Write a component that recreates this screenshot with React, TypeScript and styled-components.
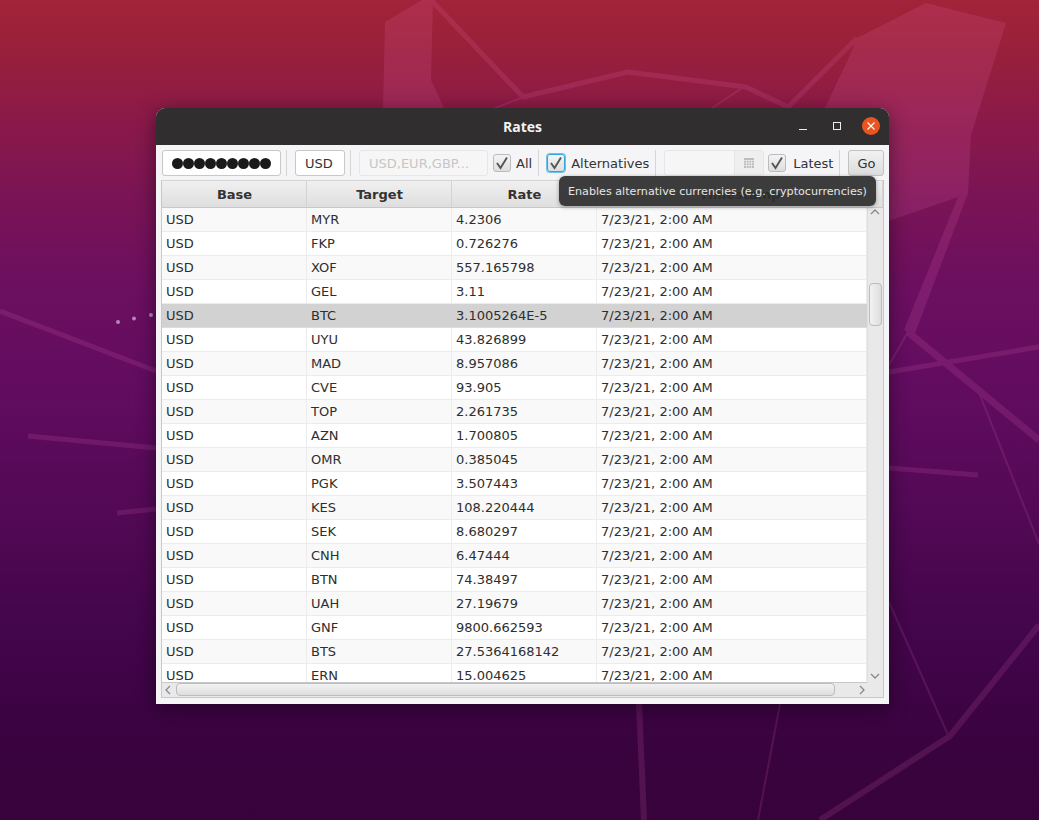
import styled, { createGlobalStyle } from 'styled-components';

const rows = [
  ['MYR', '4.2306'],
  ['FKP', '0.726276'],
  ['XOF', '557.165798'],
  ['GEL', '3.11'],
  ['BTC', '3.1005264E-5'],
  ['UYU', '43.826899'],
  ['MAD', '8.957086'],
  ['CVE', '93.905'],
  ['TOP', '2.261735'],
  ['AZN', '1.700805'],
  ['OMR', '0.385045'],
  ['PGK', '3.507443'],
  ['KES', '108.220444'],
  ['SEK', '8.680297'],
  ['CNH', '6.47444'],
  ['BTN', '74.38497'],
  ['UAH', '27.19679'],
  ['GNF', '9800.662593'],
  ['BTS', '27.5364168142'],
  ['ERN', '15.004625'],
];

const GlobalStyle = createGlobalStyle`
  html, body {
    margin: 0;
    padding: 0;
    height: 100%;
    overflow: hidden;
    background: #3a0340;
  }
  * { box-sizing: border-box; }
`;

const Desktop = styled.div`
  position: relative;
  width: 1039px;
  height: 820px;
  overflow: hidden;
  font-family: 'DejaVu Sans', sans-serif;
  font-size: 13px;
  color: #333;
  background: linear-gradient(180deg, #a2233a 0%, #9a2139 5%, #8c1a48 14%, #7a1455 24%, #6c0f60 35%, #620c60 47%, #530956 62%, #42054a 78%, #3a0340 90%, #38033c 100%);
`;

const Wallpaper = styled.svg`
  position: absolute;
  inset: 0;
`;

const Window = styled.div`
  position: absolute;
  left: 156px;
  top: 108px;
  width: 733px;
  height: 596px;
  display: flex;
  flex-direction: column;
  background: #f5f4f6;
  border-radius: 9px 9px 0 0;
  box-shadow: 0 4px 20px rgba(0, 0, 0, 0.45);
`;

const TitleBar = styled.div`
  position: relative;
  flex: none;
  height: 37px;
  display: flex;
  align-items: center;
  justify-content: center;
  background: #302e2e;
  border-radius: 9px 9px 0 0;
  color: #f2f2f2;
  font-family: 'Open Sans', 'Noto Sans', sans-serif;
  font-weight: 700;
  font-size: 14px;
`;

const WindowButtons = styled.div`
  position: absolute;
  right: 9px;
  top: 9px;
  display: flex;
  align-items: center;
  gap: 16px;
`;

const WindowButton = styled.div<{ $close?: boolean }>`
  width: 18px;
  height: 18px;
  display: flex;
  align-items: center;
  justify-content: center;
  border-radius: 50%;
  background: ${(p) => (p.$close ? '#e9541f' : 'transparent')};
`;

const Toolbar = styled.div`
  flex: none;
  height: 35px;
  display: flex;
  align-items: center;
  padding: 1px 5px 0 6px;
`;

const Field = styled.div<{ $width: number; $disabled?: boolean }>`
  flex: none;
  width: ${(p) => p.$width}px;
  height: 26px;
  display: flex;
  align-items: center;
  padding: 0 9px;
  background: ${(p) => (p.$disabled ? '#f6f6f6' : '#fff')};
  border: 1px solid ${(p) => (p.$disabled ? '#e6e6e6' : '#c8c8c8')};
  border-radius: 3px;
  color: ${(p) => (p.$disabled ? '#c6c6c6' : '#333')};
  white-space: nowrap;
`;

const Dots = styled.span`
  display: flex;
`;

const Dot = styled.i`
  display: block;
  width: 11px;
  height: 11px;
  border-radius: 50%;
  background: #1a1a1a;
`;

const Separator = styled.div<{ $left?: number; $right?: number }>`
  flex: none;
  width: 1px;
  height: 26px;
  background: #d6d6d6;
  margin: 0 ${(p) => p.$right ?? 8}px 0 ${(p) => p.$left ?? 5}px;
`;

const CheckRow = styled.div<{ $left?: number; $gap?: number }>`
  flex: none;
  display: flex;
  align-items: center;
  gap: ${(p) => p.$gap ?? 6}px;
  margin: 0 6px 0 ${(p) => p.$left ?? 0}px;
`;

const CheckBox = styled.div<{ $focused?: boolean }>`
  width: 18px;
  height: 18px;
  display: flex;
  align-items: center;
  justify-content: center;
  border-radius: 3px;
  border: 1px solid ${(p) => (p.$focused ? '#2aa6dc' : '#bcbcbc')};
  box-shadow: ${(p) => (p.$focused ? '0 0 0 1px #6fc3e8' : 'none')};
  background: linear-gradient(180deg, #f4f4f4, #dedede);
`;

const DatePicker = styled.div`
  flex: none;
  width: 100px;
  height: 26px;
  display: flex;
  border: 1px solid #e6e6e6;
  border-radius: 3px;
  background: #f6f6f6;
  margin-right: 4px;
`;

const DateInput = styled.div`
  flex: 1;
`;

const DateButton = styled.div`
  flex: none;
  width: 29px;
  display: flex;
  align-items: center;
  justify-content: center;
  border-left: 1px solid #e6e6e6;
  background: #efefef;
`;

const GoButton = styled.div`
  flex: none;
  width: 36px;
  height: 26px;
  display: flex;
  align-items: center;
  justify-content: center;
  border: 1px solid #c2c2c2;
  border-radius: 3px;
  background: linear-gradient(180deg, #f2f2f2, #dcdcdc);
`;

const Table = styled.div`
  flex: none;
  margin-left: 5px;
  width: 723px;
  height: 518px;
  display: grid;
  grid-template-columns: 705px 16px;
  grid-template-rows: 27px 474px 15px;
  border: 1px solid #c8c8c8;
  border-top-color: #d4d4d4;
  overflow: hidden;
  background: #fff;
`;

const Header = styled.div`
  grid-column: 1 / 3;
  display: grid;
  grid-template-columns: 145px 145px 145px 1fr;
  background: linear-gradient(180deg, #f0f0f0, #dedede);
  border-bottom: 1px solid #c8c8c8;
`;

const HeaderCell = styled.div`
  display: flex;
  align-items: center;
  justify-content: center;
  padding-left: 1px;
  font-weight: 700;
  border-right: 1px solid #d4d4d4;
`;

const Body = styled.div`
  overflow: hidden;
`;

const Row = styled.div<{ $striped: boolean; $selected: boolean }>`
  height: 24px;
  display: grid;
  grid-template-columns: 145px 145px 145px 1fr;
  border-bottom: 1px solid ${(p) => (p.$selected ? '#dcdcdc' : '#ececec')};
  background: ${(p) => (p.$selected ? '#d2d2d2' : p.$striped ? '#f9f9f9' : '#fff')};
`;

const Cell = styled.div<{ $selected: boolean }>`
  display: flex;
  align-items: center;
  padding-left: 4px;
  border-right: 1px solid ${(p) => (p.$selected ? 'transparent' : '#ececec')};
  white-space: nowrap;
  color: #2e2e2e;
`;

const VBar = styled.div`
  position: relative;
  background: #e9e9e9;
  border-left: 1px solid #dedede;
`;

const Thumb = styled.div`
  position: absolute;
  left: 1px;
  top: 75px;
  width: 13px;
  height: 43px;
  border: 1px solid #bcbcbc;
  border-radius: 4px;
  background: linear-gradient(90deg, #f2f2f2, #dedede);
`;

const ArrowUp = styled.svg`
  position: absolute;
  left: 2px;
  top: 0;
`;

const ArrowDown = styled.svg`
  position: absolute;
  left: 2px;
  bottom: 2px;
`;

const HBar = styled.div`
  position: relative;
  background: #e9e9e9;
  border-top: 1px solid #c8c8c8;
`;

const HThumb = styled.div`
  position: absolute;
  left: 14px;
  top: 0;
  width: 659px;
  height: 13px;
  border: 1px solid #bcbcbc;
  border-radius: 4px;
  background: linear-gradient(180deg, #f2f2f2, #dedede);
`;

const ArrowLeft = styled.svg`
  position: absolute;
  left: 2px;
  top: 2px;
`;

const ArrowRight = styled.svg`
  position: absolute;
  right: 1px;
  top: 2px;
`;

const Corner = styled.div`
  background: #e9e9e9;
`;

const Tooltip = styled.div`
  position: absolute;
  left: 403px;
  top: 68px;
  height: 30px;
  padding: 0 9px;
  display: flex;
  align-items: center;
  white-space: nowrap;
  font-size: 11.15px;
  color: #e6e6e6;
  background: rgba(44, 44, 44, 0.92);
  border-radius: 6px;
  box-shadow: 0 1px 4px rgba(0, 0, 0, 0.35);
`;

function Check() {
  return (
    <svg width="14" height="14" viewBox="0 0 14 14" fill="none">
      <path d="M2 7 L5.5 12 L12 1.5" stroke="#555" strokeWidth="1.9" />
    </svg>
  );
}

function App() {
  return (
    <Desktop>
      <GlobalStyle />
      <Wallpaper width="1039" height="820" viewBox="0 0 1039 820">
        <g opacity="0.13">
          <g fill="#ff78c8">
            <polygon points="385,22 422,0 433,0 431,80 445,110 383,110" />
            <polygon points="857,38 926,3 1006,23 971,135 968,193 914,336 904,330 958,197 880,224 824,110 850,55" />
          </g>
          <g stroke="#ff78c8" strokeWidth="5" fill="none">
            <path d="M431 0 L523 97 L628 72 L746 87 L788 107 L857 38" strokeLinejoin="bevel" />
            <path d="M0 311 L156 371" />
            <path d="M28 436 L156 448" />
            <path d="M117 513 L156 509" />
            <path d="M908 332 L1039 440" strokeWidth="7" />
            <path d="M889 372 L1039 347" />
            <path d="M889 468 L978 475" />
            <path d="M1039 625 L950 736 L820 820" strokeWidth="6" />
            <path d="M639 704 L644 820" strokeWidth="6" />
            <path d="M908 332 L889 365" strokeWidth="2" />
            <path d="M495 108 L521 98" strokeWidth="2" />
            <path d="M712 108 L742 88" strokeWidth="2" />
            <path d="M980 395 L1039 544" strokeWidth="2" />
            <path d="M889 602 L948 735" strokeWidth="2" />
            <path d="M780 704 L758 820" strokeWidth="2" />
          </g>
        </g>
        <g fill="#b286b6">
          <circle cx="118" cy="322" r="2" />
          <circle cx="134" cy="318.5" r="2" />
          <circle cx="151" cy="315" r="2" />
        </g>
      </Wallpaper>
      <Window>
        <TitleBar>
          Rates
          <WindowButtons>
            <WindowButton>
              <svg width="10" height="10" viewBox="0 0 10 10"><path d="M1 8.5 H9" stroke="#eee" strokeWidth="1" /></svg>
            </WindowButton>
            <WindowButton>
              <svg width="10" height="10" viewBox="0 0 10 10"><rect x="1.5" y="1.5" width="7" height="7" fill="none" stroke="#eee" strokeWidth="1" /></svg>
            </WindowButton>
            <WindowButton $close>
              <svg width="10" height="10" viewBox="0 0 10 10"><path d="M1.5 1.5 L8.5 8.5 M8.5 1.5 L1.5 8.5" stroke="#fff" strokeWidth="1.2" /></svg>
            </WindowButton>
          </WindowButtons>
        </TitleBar>
        <Toolbar>
          <Field $width={119}>
            <Dots>
              {Array.from({ length: 9 }).map((_, i) => <Dot key={i} />)}
            </Dots>
          </Field>
          <Separator />
          <Field $width={50}>USD</Field>
          <Separator />
          <Field $disabled $width={129}>USD,EUR,GBP...</Field>
          <CheckRow $left={5} $gap={5}>
            <CheckBox><Check /></CheckBox>
            All
          </CheckRow>
          <Separator $left={0} />
          <CheckRow>
            <CheckBox $focused><Check /></CheckBox>
            Alternatives
          </CheckRow>
          <Separator $left={0} />
          <DatePicker>
            <DateInput />
            <DateButton>
              <svg width="10" height="10" viewBox="0 0 10 10"><rect width="10" height="10" fill="#bdbdbd" /><path d="M0 2.5 H10 M0 5 H10 M0 7.5 H10 M2.5 2 V10 M5 2 V10 M7.5 2 V10" stroke="#efefef" strokeWidth="0.7" /></svg>
            </DateButton>
          </DatePicker>
          <CheckRow $gap={7}>
            <CheckBox><Check /></CheckBox>
            Latest
          </CheckRow>
          <Separator $left={0} />
          <GoButton>Go</GoButton>
        </Toolbar>
        <Table>
          <Header>
            <HeaderCell>Base</HeaderCell>
            <HeaderCell>Target</HeaderCell>
            <HeaderCell>Rate</HeaderCell>
            <HeaderCell>Timestamp</HeaderCell>
          </Header>
          <Body>
            {rows.map((r, i) => {
              const selected = r[0] === 'BTC';
              return (
                <Row key={r[0]} $striped={i % 2 === 0} $selected={selected}>
                  <Cell $selected={selected}>USD</Cell>
                  <Cell $selected={selected}>{r[0]}</Cell>
                  <Cell $selected={selected}>{r[1]}</Cell>
                  <Cell $selected={selected}>7/23/21, 2:00 AM</Cell>
                </Row>
              );
            })}
          </Body>
          <VBar>
            <ArrowUp width="10" height="8" viewBox="0 0 10 8"><path d="M1 6 L5 2 L9 6" stroke="#8a8a8a" strokeWidth="1.3" fill="none" /></ArrowUp>
            <Thumb />
            <ArrowDown width="10" height="8" viewBox="0 0 10 8"><path d="M1 2 L5 6 L9 2" stroke="#8a8a8a" strokeWidth="1.3" fill="none" /></ArrowDown>
          </VBar>
          <HBar>
            <ArrowLeft width="8" height="10" viewBox="0 0 8 10"><path d="M6 1 L2 5 L6 9" stroke="#8a8a8a" strokeWidth="1.3" fill="none" /></ArrowLeft>
            <HThumb />
            <ArrowRight width="8" height="10" viewBox="0 0 8 10"><path d="M2 1 L6 5 L2 9" stroke="#8a8a8a" strokeWidth="1.3" fill="none" /></ArrowRight>
          </HBar>
          <Corner />
        </Table>
        <Tooltip>Enables alternative currencies (e.g. cryptocurrencies)</Tooltip>
      </Window>
    </Desktop>
  );
}

export default App;
